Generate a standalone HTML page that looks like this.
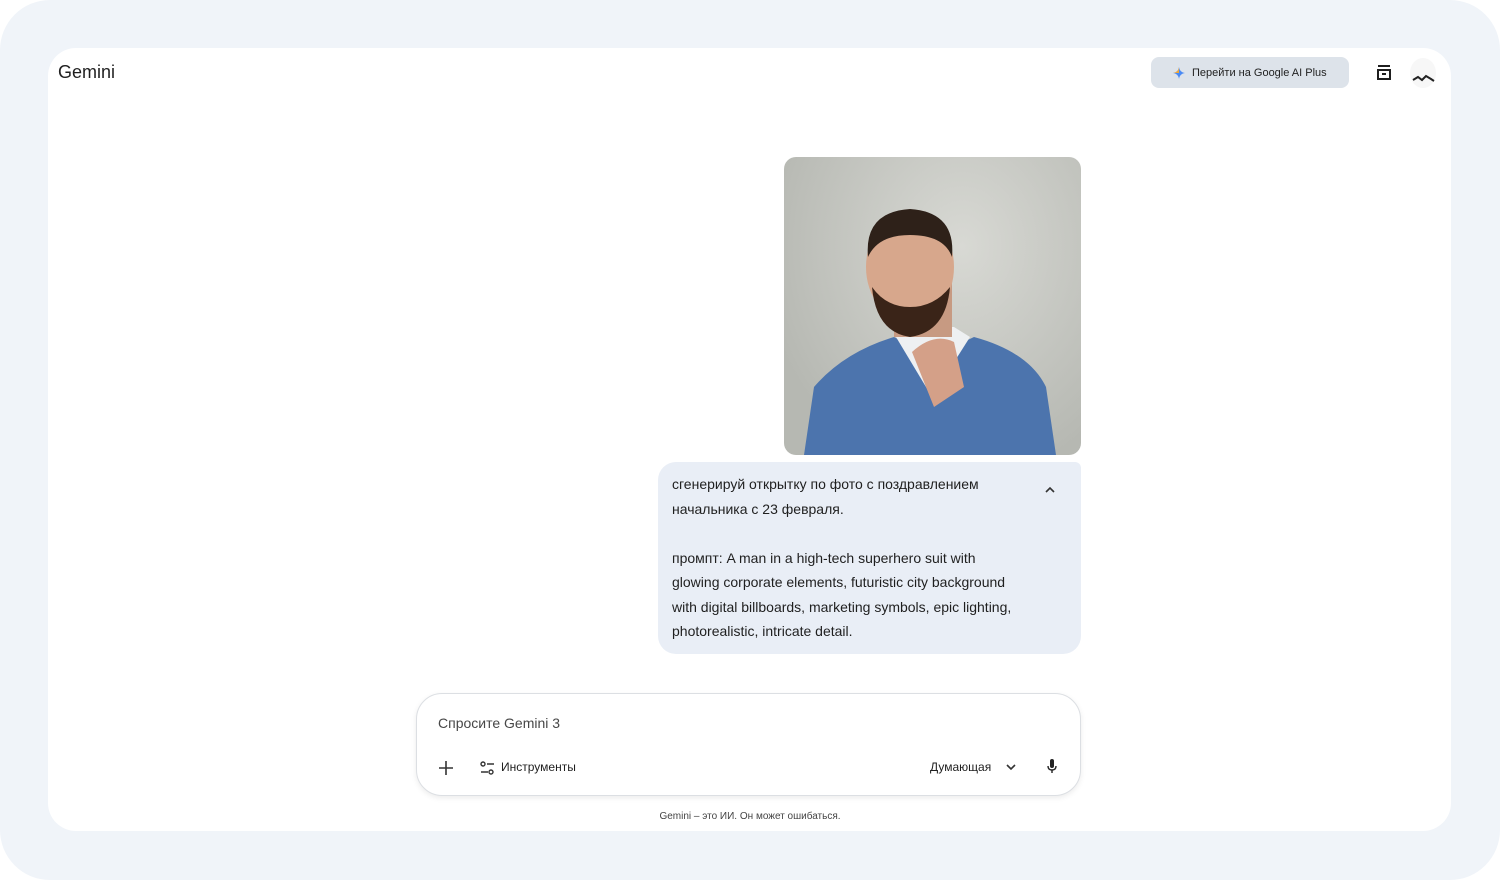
<!DOCTYPE html>
<html><head><meta charset="utf-8"><style>
*{margin:0;padding:0;box-sizing:border-box}
html{background:#fff}
body{width:1500px;height:880px;background:#f0f4f9;font-family:"Liberation Sans",sans-serif;position:relative;overflow:hidden;border-radius:50px}
.card{position:absolute;left:48px;top:48px;width:1403px;height:783px;background:#fff;border-radius:28px}
.logo{position:absolute;left:58px;top:62px;font-size:18px;color:#1f1f1f}
.plus{position:absolute;left:1151px;top:57px;width:198px;height:31px;background:#dde3ea;border-radius:8px;font-size:11px;color:#1f1f1f;display:flex;align-items:center;padding-left:22px;gap:7px}
.photo{position:absolute;left:784px;top:157px;width:297px;height:298px;border-radius:12px;overflow:hidden;background:radial-gradient(ellipse at 60% 30%,#d8d9d4,#b6b8b2 80%)}
.bubble{position:absolute;left:658px;top:462px;width:423px;height:192px;background:#e9eef6;border-radius:18px 6px 18px 18px;padding:10px 14px;font-size:14px;line-height:24.5px;color:#1f1f1f}
.input{position:absolute;left:416px;top:693px;width:665px;height:103px;border:1px solid #dcdfe3;border-radius:26px;box-shadow:0 2px 6px rgba(0,0,0,.08);background:#fff}
.ph{position:absolute;left:21px;top:21px;font-size:14px;color:#474747}
.foot{position:absolute;left:0;width:1500px;top:811px;text-align:center;font-size:10px;color:#444}
</style></head><body>
<div class="card"></div>
<div class="logo">Gemini</div>
<div class="plus"><svg width="12" height="12" viewBox="0 0 12 12"><path d="M6 0C6.5 3.5 8.5 5.5 12 6 8.5 6.5 6.5 8.5 6 12 5.5 8.5 3.5 6.5 0 6 3.5 5.5 5.5 3.5 6 0Z" fill="#4a8af4"/><path d="M6 0C5.5 3.5 3.5 5.5 0 6L6 6Z" fill="#f0a83a"/></svg>Перейти на Google AI Plus</div>
<svg style="position:absolute;left:1376px;top:64px" width="16" height="17" viewBox="0 0 16 17" fill="none" stroke="#1f1f1f" stroke-width="2"><path d="M2 2h12M1 6h14M2 6v9h12V6M6 10h4"/></svg>
<div style="position:absolute;left:1410px;top:58px;width:26px;height:30px;border-radius:50%;background:#f7f7f7"><svg width="26" height="30"><path d="M3 22l5-3 4 3 4-4 5 3 3 2" stroke="#222" stroke-width="2" fill="none"/></svg></div>
<div class="photo">
<svg width="297" height="298" viewBox="0 0 297 298">
<path d="M20 298 L30 230 Q60 195 110 180 L148 200 L190 180 Q245 195 262 230 L272 298Z" fill="#4c74ad"/>
<path d="M112 180 L148 240 L186 180 L170 170 L128 170Z" fill="#eef0f2"/>
<rect x="110" y="110" width="58" height="70" fill="#c79a82"/>
<ellipse cx="126" cy="110" rx="44" ry="55" fill="#d7a78c"/>
<path d="M84 100 Q80 55 126 52 Q172 55 168 100 Q160 78 126 78 Q94 78 84 100Z" fill="#2e2119"/>
<path d="M88 130 Q92 175 126 180 Q162 175 166 130 Q150 150 126 150 Q102 150 88 130Z" fill="#3a2418"/>
<path d="M128 195 Q150 175 170 185 L180 230 L150 250Z" fill="#d4a088"/>
</svg>
</div>
<div class="bubble">сгенерируй открытку по фото с поздравлением<br>начальника с 23 февраля.<br><br>промпт: A man in a high-tech superhero suit with<br>glowing corporate elements, futuristic city background<br>with digital billboards, marketing symbols, epic lighting,<br>photorealistic, intricate detail.
<svg style="position:absolute;right:26px;top:24px" width="10" height="7" viewBox="0 0 10 7"><path d="M1 6l4-4 4 4" stroke="#333" stroke-width="1.6" fill="none"/></svg></div>
<div class="input"><div class="ph">Спросите Gemini 3</div>
<svg style="position:absolute;left:22px;top:67px" width="14" height="14"><path d="M7 0v14M0 7h14" stroke="#333" stroke-width="1.6"/></svg>
<svg style="position:absolute;left:63px;top:67px" width="15" height="14" fill="none" stroke="#333" stroke-width="1.4"><circle cx="3" cy="3" r="2"/><path d="M7 3h7M1 11h7"/><circle cx="11" cy="11" r="2"/></svg>
<div style="position:absolute;left:84px;top:66px;font-size:12px;color:#1f1f1f">Инструменты</div>
<div style="position:absolute;left:513px;top:66px;font-size:12px;color:#1f1f1f">Думающая</div>
<svg style="position:absolute;left:589px;top:70px" width="10" height="7"><path d="M1 1l4 4 4-4" stroke="#333" stroke-width="1.6" fill="none"/></svg>
<svg style="position:absolute;left:630px;top:65px" width="10" height="16" fill="#222"><rect x="3" y="0" width="4" height="9" rx="2"/><path d="M1 7q0 4 4 4 4 0 4-4" stroke="#222" stroke-width="1.4" fill="none"/><rect x="4.3" y="11" width="1.4" height="3"/></svg>
</div>
<div class="foot">Gemini – это ИИ. Он может ошибаться.</div>
</body></html>
